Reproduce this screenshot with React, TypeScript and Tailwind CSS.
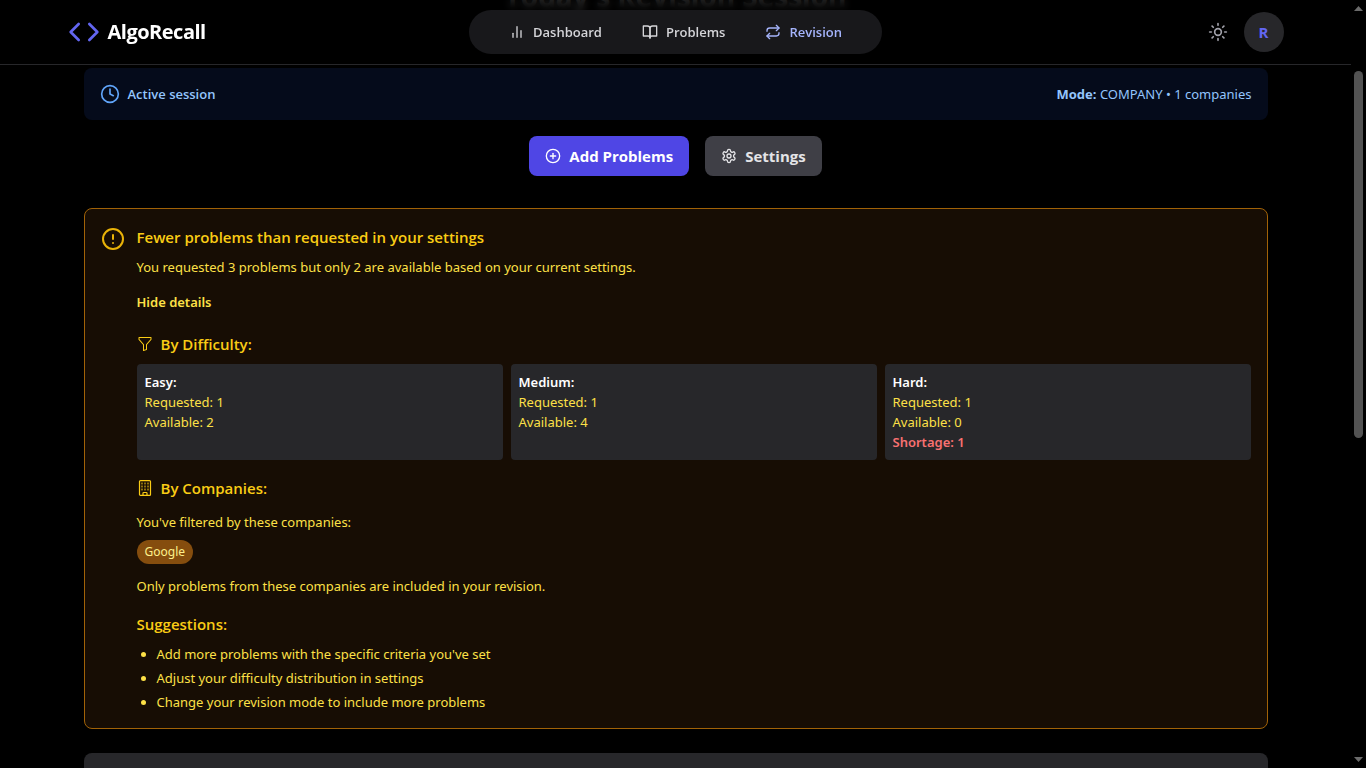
import { useState } from "react";
import type { ReactNode } from "react";
import { FiBarChart2, FiBookOpen } from "react-icons/fi";
import { BsFunnel } from "react-icons/bs";
import { LuCircleAlert, LuCirclePlus, LuClock, LuCode, LuRepeat, LuSettings, LuSun } from "react-icons/lu";

const navItems = [
  { label: "Dashboard", icon: <FiBarChart2 />, active: false },
  { label: "Problems", icon: <FiBookOpen />, active: false },
  { label: "Revision", icon: <LuRepeat />, active: true },
];

const difficulties = [
  { name: "Easy", requested: 1, available: 2 },
  { name: "Medium", requested: 1, available: 4 },
  { name: "Hard", requested: 1, available: 0 },
];

const companies = ["Google"];

const suggestions = [
  "Add more problems with the specific criteria you've set",
  "Adjust your difficulty distribution in settings",
  "Change your revision mode to include more problems",
];

function BuildingIcon() {
  return (
    <svg viewBox="0 0 16 16" className="size-4" fill="none" stroke="currentColor" aria-hidden="true">
      <rect x="2.5" y="0.6" width="11" height="14.8" rx="1" strokeWidth="1.2" />
      <path d="M6 15.2v-2a.7.7 0 0 1 .7-.7h2.6a.7.7 0 0 1 .7.7v2" strokeWidth="1.2" />
      <g fill="currentColor" stroke="none" opacity="0.65">
        {[2.5, 5.5, 8.5].map((y) =>
          [4.2, 7.2, 10.2].map((x) => <rect key={x + "-" + y} x={x} y={y} width="1.6" height="1.9" rx="0.3" />)
        )}
      </g>
    </svg>
  );
}

function Header() {
  return (
    <header className="relative z-10 border-b border-[#27272a] bg-black/85 backdrop-blur-xs">
      <div className="mx-auto grid h-16 max-w-7xl grid-cols-[1fr_auto_1fr] items-center px-8">
        <a href="#home" className="flex items-center gap-2 text-[20px] font-bold tracking-tight text-white">
          <LuCode className="size-8 text-[#6366f1]" />
          AlgoRecall
        </a>
        <nav className="flex h-11 items-center gap-2 rounded-full bg-[#18181b] px-6">
          {navItems.map((item) => (
            <a
              key={item.label}
              href={"#" + item.label.toLowerCase()}
              className={
                "flex items-center gap-2 px-4 text-[13px] leading-5 font-semibold " +
                (item.active ? "text-[#a5b4fc]" : "text-[#d4d4d8]")
              }
            >
              <span className="text-[16px]">{item.icon}</span>
              {item.label}
            </a>
          ))}
        </nav>
        <div className="flex items-center justify-end gap-4">
          <button type="button" aria-label="Toggle theme" className="text-[#a1a1aa]">
            <LuSun className="size-5" />
          </button>
          <button
            type="button"
            aria-label="Account"
            className="size-10 rounded-full bg-[#27272a] text-[15px] font-bold text-[#6366f1]"
          >
            R
          </button>
        </div>
      </div>
    </header>
  );
}

function SectionTitle({ icon, children }: { icon?: ReactNode; children: ReactNode }) {
  return (
    <h3 className="flex items-center gap-2 font-['Open_Sans',sans-serif] text-[15px] leading-6 font-semibold text-[#facc15]">
      {icon}
      {children}
    </h3>
  );
}

function ShortageNotice() {
  const [open, setOpen] = useState(true);
  return (
    <section className="mt-8 flex gap-3 rounded-lg border border-[#a16207] bg-[#170d04] p-4 font-['Noto_Sans',sans-serif] text-[13px] leading-5 text-[#fde047]">
      <LuCircleAlert className="mt-0.5 size-6 shrink-0 text-[#eab308]" />
      <div className="flex-1">
        <h2 className="font-['Open_Sans',sans-serif] text-[15px] leading-6 font-semibold text-[#facc15]">
          Fewer problems than requested in your settings
        </h2>
        <p className="mt-2">You requested 3 problems but only 2 are available based on your current settings.</p>
        <button type="button" onClick={() => setOpen(!open)} className="mt-[15px] block font-semibold">
          {open ? "Hide details" : "Show details"}
        </button>
        {open && (
          <div className="mt-5">
            <SectionTitle icon={<BsFunnel className="size-4" />}>By Difficulty:</SectionTitle>
            <div className="mt-2 grid grid-cols-3 gap-2">
              {difficulties.map((d) => (
                <div key={d.name} className="rounded-sm bg-[#27272a] p-2">
                  <p className="font-semibold text-white">{d.name}:</p>
                  <p>Requested: {d.requested}</p>
                  <p>Available: {d.available}</p>
                  {d.available < d.requested && (
                    <p className="font-semibold text-[#f87171]">Shortage: {d.requested - d.available}</p>
                  )}
                </div>
              ))}
            </div>
            <div className="mt-4">
              <SectionTitle icon={<BuildingIcon />}>By Companies:</SectionTitle>
            </div>
            <p className="mt-3">You've filtered by these companies:</p>
            <div className="mt-2 flex gap-2">
              {companies.map((c) => (
                <span key={c} className="rounded-full bg-[#854d0e] px-2 py-1 text-[12px] leading-4 text-[#fef08a]">
                  {c}
                </span>
              ))}
            </div>
            <p className="mt-3">Only problems from these companies are included in your revision.</p>
            <div className="mt-4">
              <SectionTitle>Suggestions:</SectionTitle>
            </div>
            <ul className="mt-2 list-disc space-y-1 pl-5">
              {suggestions.map((s) => (
                <li key={s}>{s}</li>
              ))}
            </ul>
          </div>
        )}
      </div>
    </section>
  );
}

function ScrollTrack() {
  return (
    <div aria-hidden="true" className="flex w-[15px] shrink-0 flex-col items-center bg-black py-1.5">
      <svg viewBox="0 0 9 5" className="h-[5px] w-[9px] fill-[#6b6b6b]">
        <path d="M0 5 4.5 0 9 5z" />
      </svg>
      <div className="mt-[60px] h-[367px] w-[9px] rounded-full bg-[#525252]" />
      <svg viewBox="0 0 9 5" className="mt-auto h-[5px] w-[9px] fill-[#6b6b6b]">
        <path d="M0 0h9L4.5 5z" />
      </svg>
    </div>
  );
}

export default function App() {
  return (
    <div className="flex h-screen overflow-hidden bg-black font-['Open_Sans',sans-serif]">
      <div className="min-w-0 flex-1 overflow-hidden">
        <Header />
        <main className="mx-auto -mt-[87px] max-w-7xl px-12">
          <h1 className="text-center text-[28px] leading-9 font-bold text-white">Today's Revision Session</h1>
          <div className="mt-[54px] flex h-[52px] items-center justify-between rounded-lg bg-[#050b1b] px-4 text-[13px] leading-5 text-[#93c5fd]">
            <p className="flex items-center gap-2 font-semibold">
              <LuClock className="size-5 text-[#60a5fa]" />
              Active session
            </p>
            <p className="font-['Noto_Sans',sans-serif]">
              <strong className="font-bold">Mode:</strong> COMPANY • 1 companies
            </p>
          </div>
          <div className="mt-4 flex justify-center gap-4 text-[15px] leading-6 font-bold">
            <button type="button" className="flex h-10 items-center gap-2 rounded-lg bg-[#4f46e5] px-4 text-white">
              <LuCirclePlus className="size-4" />
              Add Problems
            </button>
            <button type="button" className="flex h-10 items-center gap-2 rounded-lg bg-[#3f3f46] px-4 text-[#e4e4e7]">
              <LuSettings className="size-4" />
              Settings
            </button>
          </div>
          <ShortageNotice />
          <section aria-label="Problems" className="mt-6 h-24 rounded-lg bg-[#27272a]" />
        </main>
      </div>
      <ScrollTrack />
    </div>
  );
}
